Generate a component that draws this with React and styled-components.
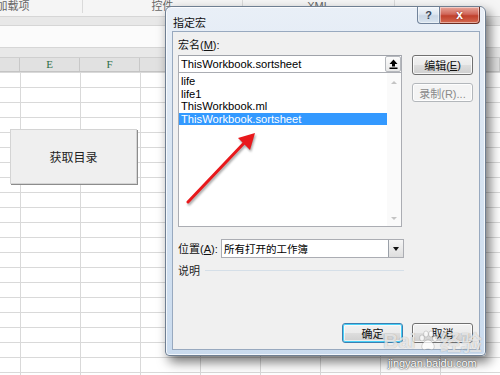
import styled, { createGlobalStyle } from "styled-components";

const GlobalStyle = createGlobalStyle`
  html, body { margin: 0; padding: 0; }
  body {
    width: 500px;
    height: 375px;
    overflow: hidden;
    background: #fff;
    font-family: "Liberation Sans", "Noto Sans CJK SC", sans-serif;
  }
`;

const Screen = styled.div`
  position: relative;
  width: 500px;
  height: 375px;
  overflow: hidden;
  display: flex;
  flex-direction: column;
  background: #fff;
`;

/* ---------- excel behind ---------- */
const Ribbon = styled.div`
  display: flex;
  height: 16px;
  background: #f5f5f5;
  flex-shrink: 0;
`;

const RibbonGroup = styled.div`
  width: ${(p) => p.w}px;
  margin-left: ${(p) => p.ml || 0}px;
  flex-shrink: 0;
  border-right: 1px solid #dadada;
  height: 13px;
  font-size: 11px;
  line-height: 12px;
  color: #666;
  text-align: center;
  box-sizing: border-box;
`;

const Band = styled.div`
  height: ${(p) => p.h}px;
  background: ${(p) => p.bg};
  border-top: 1px solid #d6d6d6;
  box-sizing: border-box;
  flex-shrink: 0;
`;

const HeaderRow = styled.div`
  display: flex;
  height: 15px;
  background: #e1e1e1;
  border-top: 1px solid #cfcfcf;
  border-bottom: 1px solid #c4c4c4;
  box-sizing: border-box;
  flex-shrink: 0;
  margin-left: -40px;
`;

const ColHead = styled.div`
  width: 60px;
  flex-shrink: 0;
  border-right: 1px solid #c8c8c8;
  box-sizing: border-box;
  text-align: center;
  font-family: "Liberation Serif", serif;
  font-size: 11px;
  line-height: 13px;
  color: #2e6e48;
`;

const Grid = styled.div`
  flex: 1;
  background-color: #fff;
  background-image: linear-gradient(to right, #d9d9d9 1px, transparent 1px),
    linear-gradient(to bottom, #d9d9d9 1px, transparent 1px);
  background-size: 60px 15px;
  background-position: 20px 0;
`;

const SheetButton = styled.div`
  position: absolute;
  left: 10px;
  top: 129px;
  width: 127px;
  height: 55px;
  box-sizing: border-box;
  background: #efefef;
  border: 1px solid #d4d4d4;
  box-shadow: 1px 1px 0 #8c8c8c;
  display: flex;
  align-items: center;
  justify-content: center;
  font-family: "Noto Sans CJK SC", sans-serif;
  font-size: 12px;
  color: #222;
`;

/* ---------- dialog ---------- */
const Dialog = styled.div`
  position: absolute;
  left: 165px;
  top: 6px;
  width: 321px;
  height: 350px;
  box-sizing: border-box;
  border: 1px solid #6f7f92;
  border-radius: 6px 6px 4px 4px;
  background: linear-gradient(#e9eff7, #d9e5f2 40%, #cadbee);
  box-shadow: inset 0 0 0 1px rgba(255, 255, 255, 0.75),
    4px 6px 12px rgba(0, 0, 0, 0.55);
  display: flex;
  flex-direction: column;
  padding: 0 5px 5px 6px;
  font-size: 11px;
  color: #000;
`;

const TitleBar = styled.div`
  display: flex;
  height: 24px;
  flex-shrink: 0;
`;

const Title = styled.div`
  padding: 8px 0 0 1px;
  font-family: "Noto Sans CJK SC", sans-serif;
  font-size: 11px;
  line-height: 14px;
  color: #111;
`;

const CaptionButtons = styled.div`
  margin-left: auto;
  display: flex;
  height: 17px;
`;

const CaptionBtn = styled.div`
  width: ${(p) => p.w}px;
  box-sizing: border-box;
  display: flex;
  align-items: center;
  justify-content: center;
  border: 1px solid ${(p) => (p.close ? "#6b2c22" : "#71839b")};
  border-top: none;
  border-left: ${(p) => (p.close ? "none" : undefined)};
  border-radius: ${(p) => (p.close ? "0 0 4px 0" : "0 0 0 4px")};
  background: ${(p) =>
    p.close
      ? "linear-gradient(#e9a79b, #d0675a 45%, #c0402c 55%, #d46a52)"
      : "linear-gradient(#f2f6fb, #dde6f0 45%, #c9d6e5 55%, #d9e4ef)"};
  box-shadow: inset 0 0 0 1px rgba(255, 255, 255, 0.45);
  color: ${(p) => (p.close ? "#fff" : "#3a4656")};
  font-weight: bold;
  font-size: ${(p) => (p.close ? 12 : 11)}px;
  text-shadow: ${(p) => (p.close ? "0 0 2px #7a2010" : "none")};
`;

const Client = styled.div`
  flex: 1;
  display: flex;
  flex-direction: column;
  background: #f0f0f0;
  border: 1px solid #98a9bf;
  font-family: "Liberation Sans", "Noto Sans CJK SC", sans-serif;
`;

const Body = styled.div`
  display: grid;
  grid-template-columns: 226px 61px;
  column-gap: 8px;
  padding: 6px 6px 0 5px;
`;

const LeftCol = styled.div`
  display: flex;
  flex-direction: column;
`;

const RightCol = styled.div`
  display: flex;
  flex-direction: column;
  gap: 8px;
  padding-top: 17px;
`;

const Label = styled.div`
  line-height: 14px;
  height: 14px;
  margin-bottom: ${(p) => p.mb || 0}px;
  white-space: nowrap;
  color: #111;
  u { text-decoration: underline; }
`;

const Combo = styled.div`
  display: flex;
  width: 224px;
  height: 18px;
  box-sizing: border-box;
  border: 1px solid #abadb3;
  border-top-color: #a0a3aa;
  background: #fff;
`;

const ComboText = styled.div`
  flex: 1;
  padding-left: 2px;
  line-height: 16px;
  font-size: 11.2px;
`;

const SmallBtn = styled.div`
  width: 16px;
  height: 16px;
  box-sizing: border-box;
  border: 1px solid #b5b8bd;
  border-radius: 2px;
  background: linear-gradient(#fbfbfb, #e8e8e8);
  display: flex;
  align-items: center;
  justify-content: center;
`;

const List = styled.div`
  display: flex;
  width: 224px;
  height: 154px;
  box-sizing: border-box;
  border: 1px solid #abadb3;
  border-top: none;
  background: #fff;
`;

const Items = styled.div`
  flex: 1;
  padding-top: 2px;
`;

const Item = styled.div`
  height: 12.5px;
  line-height: 12.5px;
  padding-left: 2px;
  font-size: 11.2px;
  background: ${(p) => (p.selected ? "#3399ff" : "transparent")};
  color: ${(p) => (p.selected ? "#fff" : "#000")};
`;

const ScrollBar = styled.div`
  width: 14px;
  display: flex;
  flex-direction: column;
  justify-content: space-between;
  align-items: center;
  padding: 8px 0 6px;
  background: #fafafa;
`;

const Tri = styled.div`
  width: 0;
  height: 0;
  border-left: 3px solid transparent;
  border-right: 3px solid transparent;
  ${(p) =>
    p.up
      ? "border-bottom: 3px solid #c4c4c4;"
      : "border-top: 3px solid #c4c4c4;"}
`;

const FieldRow = styled.div`
  display: flex;
  align-items: center;
  margin-top: 12px;
  height: 19px;
`;

const Select = styled.div`
  margin-left: auto;
  width: 183px;
  height: 19px;
  box-sizing: border-box;
  border: 1px solid #abadb3;
  background: #fff;
  display: flex;
`;

const SelectText = styled.div`
  flex: 1;
  padding-left: 2px;
  line-height: 17px;
  font-family: "Noto Sans CJK SC", sans-serif;
  font-size: 10.5px;
`;

const DropBtn = styled(SmallBtn)`
  width: 15px;
  height: 17px;
  border-color: #9aa0a8;
  border-top: none;
  border-right: none;
  border-bottom: none;
  border-radius: 0;
  background: linear-gradient(#f6f6f6, #dedede);
`;

const DownArrow = styled.div`
  width: 0;
  height: 0;
  border-left: 3.5px solid transparent;
  border-right: 3.5px solid transparent;
  border-top: 4px solid #111;
`;

const DescRow = styled.div`
  display: flex;
  align-items: center;
  gap: 5px;
  margin-top: 6px;
  height: 12px;
  color: #222;
`;

const Rule = styled.div`
  flex: 1;
  height: 1px;
  background: #d5dfe8;
`;

const Button = styled.div`
  width: 61px;
  height: ${(p) => p.h || 20}px;
  box-sizing: border-box;
  border-radius: 3px;
  border: 1px solid
    ${(p) => (p.disabled ? "#b3b7bb" : p.focused ? "#3c7fb1" : "#707070")};
  background: ${(p) =>
    p.disabled
      ? "#f4f4f4"
      : "linear-gradient(#f2f2f2, #ebebeb 48%, #dddddd 52%, #cfcfcf)"};
  box-shadow: ${(p) =>
    p.focused
      ? "inset 0 0 0 1px #48d0f8, inset 0 0 0 2px rgba(255,255,255,0.6)"
      : "inset 0 0 0 1px rgba(255,255,255,0.8)"};
  color: ${(p) => (p.disabled ? "#8a8a8a" : "#111")};
  display: flex;
  align-items: center;
  justify-content: center;
  font-size: 11px;
  white-space: nowrap;
  u { text-decoration: underline; }
`;

const Footer = styled.div`
  margin-top: auto;
  display: flex;
  justify-content: flex-end;
  gap: 9px;
  padding: 0 6px 6px 0;
`;

/* ---------- overlays ---------- */
const Arrow = styled.svg`
  position: absolute;
  left: 180px;
  top: 126px;
  overflow: visible;
  filter: drop-shadow(1px 2px 1px rgba(0, 0, 0, 0.35));
`;

const Watermark = styled.div`
  position: absolute;
  left: 383px;
  top: 326px;
  display: flex;
  align-items: center;
  gap: 1px;
  font-family: "Liberation Sans", "Noto Sans CJK SC", sans-serif;
  font-weight: bold;
  font-size: 21px;
  color: rgba(255, 255, 255, 0.72);
  text-shadow: 0 0 1px rgba(0, 0, 0, 0.35);
`;

const WatermarkUrl = styled.div`
  position: absolute;
  left: 388px;
  top: 357px;
  font-family: "Liberation Sans", sans-serif;
  font-size: 11px;
  color: #fff;
  text-shadow: 0 0 2px #444, 0 0 1px #444;
`;

const macros = ["life", "life1", "ThisWorkbook.ml", "ThisWorkbook.sortsheet"];
const columns = ["", "E", "F", "", "", "", "", "", "", ""];

export default function App() {
  return (
    <Screen>
      <GlobalStyle />
      <Ribbon>
        <RibbonGroup w={139} ml={-56}>加载项</RibbonGroup>
        <RibbonGroup w={160}>控件</RibbonGroup>
        <RibbonGroup w={152}>XML</RibbonGroup>
        <RibbonGroup w={160} />
      </Ribbon>
      <Band h={9} bg="#e8e8e8" />
      <Band h={22} bg="#fbfbfb" />
      <Band h={10} bg="#e8e8e8" />
      <HeaderRow>
        {columns.map((c, i) => (
          <ColHead key={i}>{c}</ColHead>
        ))}
      </HeaderRow>
      <Grid />

      <SheetButton>获取目录</SheetButton>

      <Dialog>
        <TitleBar>
          <Title>指定宏</Title>
          <CaptionButtons>
            <CaptionBtn w={23}>?</CaptionBtn>
            <CaptionBtn w={40} close>
              x
            </CaptionBtn>
          </CaptionButtons>
        </TitleBar>
        <Client>
          <Body>
            <LeftCol>
              <Label mb={3}>
                宏名(<u>M</u>):
              </Label>
              <Combo>
                <ComboText>ThisWorkbook.sortsheet</ComboText>
                <SmallBtn>
                  <svg width="9" height="10" viewBox="0 0 9 10">
                    <path d="M4.5 0.5 L8.5 5 H6 V7.5 H3 V5 H0.5 Z" fill="#000" />
                    <rect x="0.5" y="8.5" width="8" height="1.5" fill="#000" />
                  </svg>
                </SmallBtn>
              </Combo>
              <List>
                <Items>
                  {macros.map((m, i) => (
                    <Item key={m} selected={i === 3}>
                      {m}
                    </Item>
                  ))}
                </Items>
                <ScrollBar>
                  <Tri up />
                  <Tri />
                </ScrollBar>
              </List>
              <FieldRow>
                <Label>
                  位置(<u>A</u>):
                </Label>
                <Select>
                  <SelectText>所有打开的工作簿</SelectText>
                  <DropBtn>
                    <DownArrow />
                  </DropBtn>
                </Select>
              </FieldRow>
              <DescRow>
                说明
                <Rule />
              </DescRow>
            </LeftCol>
            <RightCol>
              <Button>
                编辑(<u>E</u>)
              </Button>
              <Button disabled h={19}>
                录制(R)...
              </Button>
            </RightCol>
          </Body>
          <Footer>
            <Button focused>确定</Button>
            <Button>取消</Button>
          </Footer>
        </Client>
      </Dialog>

      <Arrow width="80" height="80" viewBox="0 0 80 80">
        <line x1="8" y1="76" x2="66" y2="15" stroke="#e8191c" strokeWidth="3" strokeLinecap="round" />
        <path d="M75 7 L70 24 L58 12 Z" fill="#e8191c" />
      </Arrow>

      <Watermark>
        <span>Bai</span>
        <svg width="22" height="22" viewBox="0 0 22 22">
          <g fill="rgba(255,255,255,0.75)" stroke="rgba(0,0,0,0.25)" strokeWidth="0.6">
            <ellipse cx="5" cy="8" rx="2.4" ry="3" />
            <ellipse cx="9" cy="4" rx="2.4" ry="3" />
            <ellipse cx="14" cy="4" rx="2.4" ry="3" />
            <ellipse cx="18" cy="8.5" rx="2.4" ry="3" />
            <path d="M11 10 C7 10 4 15 5 18 C6 21 9 19 11 19 C13 19 16 21 17 18 C18 15 15 10 11 10 Z" />
          </g>
        </svg>
        <span>经验</span>
      </Watermark>
      <WatermarkUrl>jingyan.baidu.com</WatermarkUrl>
    </Screen>
  );
}
